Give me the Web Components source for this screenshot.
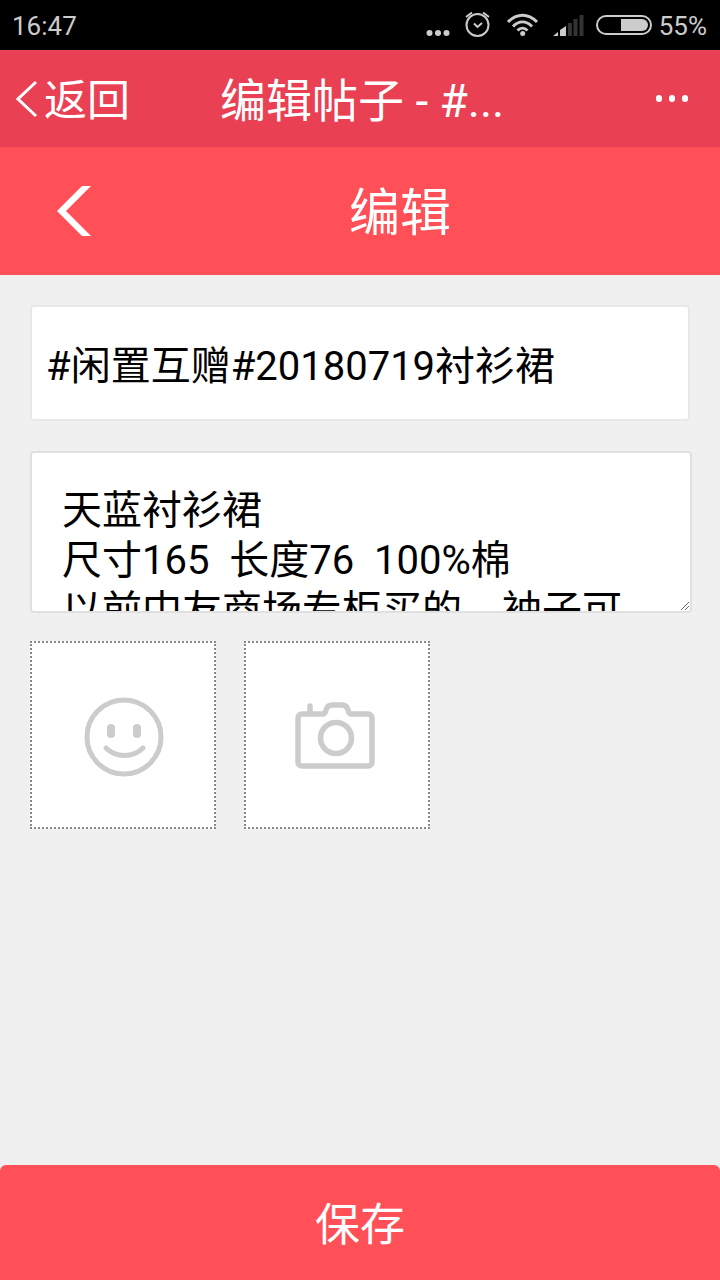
<!DOCTYPE html>
<html><head><meta charset="utf-8"><style>
html,body{margin:0;padding:0;height:100%}
body{font-family:"Roboto","Noto Sans CJK SC",sans-serif;background:#f0f0f0}
</style></head><body>
<edit-page>
<status-bar slot="status"></status-bar>
<app-bar slot="appbar" title="编辑帖子 - #..."></app-bar>
<page-header slot="header" title="编辑"></page-header>
<title-field slot="main" value="#闲置互赠#20180719衬衫裙"></title-field>
<body-field slot="main"></body-field>
<pick-row slot="main"></pick-row>
<save-button slot="footer" label="保存"></save-button>
</edit-page>
<script>
function shadow(el, html) {
  el.attachShadow({ mode: 'open' }).innerHTML = html;
}
class EditPage extends HTMLElement {
  connectedCallback() {
    shadow(this, `<style>
      :host{display:flex;flex-direction:column;height:1280px;width:720px;overflow:hidden;background:#f0f0f0}
      .main{flex:1;display:flex;flex-direction:column;padding:30px 30px 0}
    </style>
    <slot name="status"></slot><slot name="appbar"></slot><slot name="header"></slot>
    <div class="main"><slot name="main"></slot></div>
    <slot name="footer"></slot>`);
  }
}
class StatusBar extends HTMLElement {
  connectedCallback() {
    shadow(this, `<style>
      :host{display:flex;height:50px;background:#000;color:#ccc;align-items:center;font:26px Roboto,sans-serif;padding:2px 13px 0 12px;box-sizing:border-box}
      .sp{flex:1}
      svg{display:block;margin-top:-2px}
      .pct{margin-left:5px}
    </style>
    <span>16:47</span><span class="sp"></span>
    <svg width="230" height="50" viewBox="424 0 230 50">
      <g fill="#ccc"><circle cx="429.500" cy="33" r="3"/><circle cx="438" cy="33" r="3"/><circle cx="446.500" cy="33" r="3"/></g>
      <g fill="none" stroke="#ccc" stroke-width="2"><circle cx="477.500" cy="25" r="11"/><path d="M474 23.500l3.500 3.500 4.500-4"/><path d="M466 17l6-4.500M489 17l-6-4.500"/></g>
      <g fill="none" stroke="#ccc" stroke-width="3"><path d="M508 22c9-9 20-9 29 0"/><path d="M513 26.500c6-6 13-6 19 0"/><path d="M517.500 30.500c3-3 7-3 10 0"/></g>
      <circle cx="522.700" cy="33.500" r="2.500" fill="#ccc"/>
      <g fill="#ccc"><path d="M553 36l5-4v4z"/><path d="M560 36v-6l6-4v10z"/></g>
      <g fill="#333"><rect x="568" y="23" width="4" height="13"/><rect x="573.500" y="19" width="4" height="17"/><rect x="579.500" y="15" width="4" height="21"/></g>
      <rect x="597" y="16" width="54" height="18" rx="9" fill="none" stroke="#ccc" stroke-width="2"/>
      <path d="M621 19h21a6 6 0 0 1 6 6a6 6 0 0 1-6 6h-21z" fill="#ccc"/>
    </svg>
    <span class="pct">55%</span>`);
  }
}
class AppBar extends HTMLElement {
  connectedCallback() {
    shadow(this, `<style>
      :host{display:flex;height:97px;background:#e94054;color:#fff;align-items:center;box-sizing:border-box}
      .back{display:flex;align-items:center;font-size:43px;padding-left:16px;width:220px;box-sizing:border-box}
      .back span{margin-left:4px;margin-top:-3px}
      svg{display:block}
      .title{font-size:46px;width:300px;white-space:nowrap;overflow:hidden;margin-top:-3px}
      .more{margin-left:auto;margin-right:32px;display:flex;gap:6.500px}
      .more i{width:6.500px;height:6.500px;border-radius:50%;background:#fff}
    </style>
    <div class="back"><svg width="24" height="40" viewBox="0 0 24 40"><path d="M20 3L2 20l18 17" fill="none" stroke="#fff" stroke-width="3"/></svg><span>返回</span></div>
    <div class="title">${this.getAttribute('title')}</div>
    <div class="more"><i></i><i></i><i></i></div>`);
  }
}
class PageHeader extends HTMLElement {
  connectedCallback() {
    shadow(this, `<style>
      :host{display:flex;height:128px;background:#ff5058;color:#fff;align-items:center;justify-content:center;position:relative;font-size:51px;padding:0 0 4px 80px;box-sizing:border-box}
      svg{position:absolute;left:54px;top:38px}
    </style>
    <svg width="40" height="54" viewBox="0 0 40 54"><path d="M28 1h9L12 26l25 25h-9L3 26z" fill="#fff"/></svg>
    <span>${this.getAttribute('title')}</span>`);
  }
}
class TitleField extends HTMLElement {
  connectedCallback() {
    shadow(this, `<style>
      :host{display:flex;align-items:center;height:116px;box-sizing:border-box;background:#fff;border:2px solid #e8e8e8;border-radius:4px;padding:0 14px;font-size:40px;color:#000;white-space:nowrap}
    </style>${this.getAttribute('value')}`);
  }
}
class BodyField extends HTMLElement {
  connectedCallback() {
    shadow(this, `<style>
      :host{display:block;position:relative;height:162px;width:662px;box-sizing:border-box;margin-top:30px;background:#fff;border:2px solid #e0e0e0;border-radius:4px;overflow:hidden;padding:33px 30px 0;font-size:40px;line-height:50px;color:#000;white-space:pre}
      svg{position:absolute;right:0;bottom:0}
    </style>天蓝衬衫裙
尺寸165  长度76  100%棉
以前中友商场专柜买的，袖子可<svg width="10" height="10" viewBox="0 0 10 10"><path d="M9 1L1 9M9 5L5 9" stroke="#666" stroke-width="1"/></svg>`);
  }
}
class PickRow extends HTMLElement {
  connectedCallback() {
    shadow(this, `<style>
      :host{display:flex;gap:28px;margin-top:28px}
      .tile{width:186px;height:188px;box-sizing:border-box;background:#fff;border:2px dotted #888}
      svg{display:block}
    </style>
    <div class="tile"><svg width="182" height="184" viewBox="0 0 182 184"><g fill="none" stroke="#ccc" stroke-width="5"><circle cx="92" cy="94" r="37"/><path d="M74 105c10 10 27 10 37 0" stroke-linecap="round"/></g><g fill="#ccc"><rect x="75" y="81" width="8" height="14" rx="4"/><rect x="101" y="81" width="8" height="14" rx="4"/></g></svg></div>
    <div class="tile"><svg width="182" height="184" viewBox="0 0 182 184"><g transform="translate(2 0)" fill="none" stroke="#ccc" stroke-width="5.500" stroke-linejoin="round" stroke-linecap="round"><path d="M56 71H54a4 4 0 0 0-4 4v44a4 4 0 0 0 4 4h66a4 4 0 0 0 4-4V75a4 4 0 0 0-4-4H103c-2 0-2-1-3-4-1-4-3-5-6-5H84c-3 0-5 1-6 5-1 3-1 4-3 4z"/><circle cx="88" cy="95" r="15.500"/><path d="M62 63v6"/></g></svg></div>`);
  }
}
class SaveButton extends HTMLElement {
  connectedCallback() {
    shadow(this, `<style>
      :host{display:flex;height:115px;background:#ff5058;color:#fff;align-items:center;justify-content:center;font-size:45px;padding-bottom:2px;box-sizing:border-box;border-radius:6px 6px 0 0}
    </style>${this.getAttribute('label')}`);
  }
}
customElements.define('edit-page', EditPage);
customElements.define('status-bar', StatusBar);
customElements.define('app-bar', AppBar);
customElements.define('page-header', PageHeader);
customElements.define('title-field', TitleField);
customElements.define('body-field', BodyField);
customElements.define('pick-row', PickRow);
customElements.define('save-button', SaveButton);
</script>
</body></html>
